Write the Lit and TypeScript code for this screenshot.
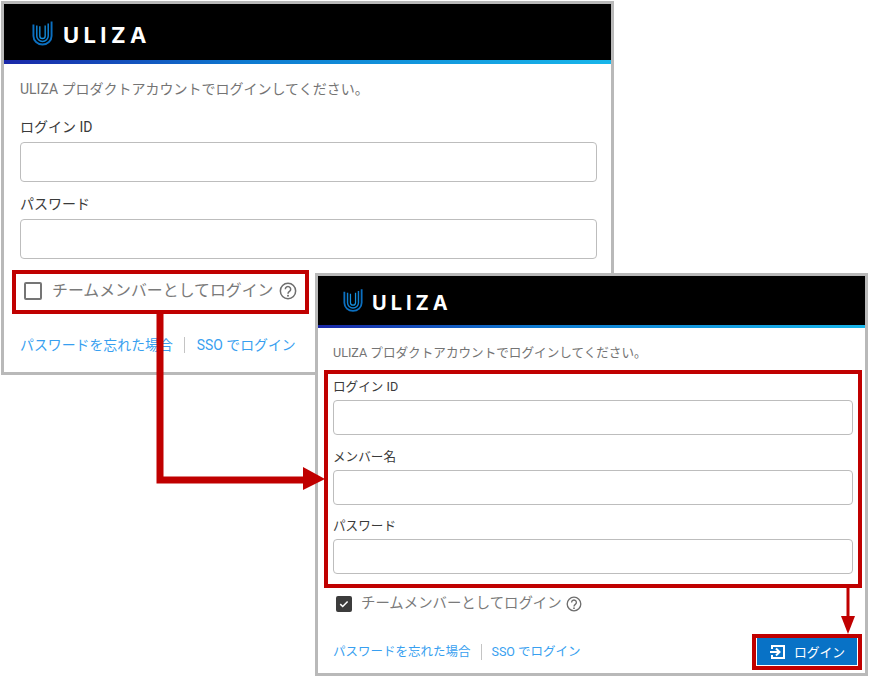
import { LitElement, html, css, svg } from "lit";
import { customElement, property } from "lit/decorators.js";

const logoMark = svg`<g fill="none" stroke-linecap="butt">
  <path d="M1.5 3v12a9.5 9 0 0 0 19 0V0" stroke="#0b6fc0" stroke-width="2"/>
  <path d="M5 4v11a6 5.8 0 0 0 12 0V2" stroke="#0f7fd0" stroke-width="1.6"/>
  <path d="M8.2 5v10a2.8 2.7 0 0 0 5.6 0V4" stroke="#1590dd" stroke-width="1.4"/>
</g>`;

@customElement("login-panel")
class LoginPanel extends LitElement {
  @property({ type: Boolean }) team = false;

  static styles = css`
    :host {
      display: flex;
      flex-direction: column;
      box-sizing: border-box;
      height: 100%;
      background: #fff;
      border: 3px solid #b9b9b9;
      font-family: Roboto, "Noto Sans CJK JP", sans-serif;
    }
    .head {
      flex: none;
      display: flex;
      align-items: center;
      gap: var(--logo-gap);
      height: var(--head-h);
      padding-top: var(--head-pad);
      padding-left: var(--logo-x);
      background: #000;
      border-bottom: var(--line-h) solid;
      border-image: linear-gradient(90deg, #1a27a8, #0e7ad0 40%, #18b6ea) 1;
    }
    .mark { width: var(--mark-w); height: var(--mark-h); flex: none; }
    .word {
      margin-top: var(--word-drop);
      color: #fff;
      font-family: Inter, "Liberation Sans", sans-serif;
      font-weight: 700;
      font-size: var(--word-size);
      letter-spacing: var(--word-track);
      line-height: 1;
    }
    .body {
      flex: 1;
      display: flex;
      flex-direction: column;
      padding: var(--pad-top) var(--pad-r) 0 var(--pad-l);
    }
    .intro {
      margin: 0 0 var(--intro-gap);
      color: #747474;
      font-size: var(--fs);
      line-height: 20px;
      white-space: nowrap;
    }
    .field { display: flex; flex-direction: column; }
    .field + .field { margin-top: var(--field-gap); }
    .label {
      color: #3a3a3a;
      font-size: var(--fs);
      line-height: 20px;
      margin-bottom: var(--label-gap);
    }
    .input {
      height: var(--input-h);
      box-sizing: border-box;
      border: 1px solid #bdbdbd;
      border-radius: 4px;
      background: #fff;
    }
    .check {
      display: flex;
      align-items: center;
      margin: var(--check-top) 0 0 var(--check-x);
      color: #7a7a7a;
      font-size: var(--check-fs);
      line-height: 20px;
    }
    .box {
      flex: none;
      box-sizing: border-box;
      width: var(--box);
      height: var(--box);
      margin-right: var(--box-gap);
      border: 2px solid #757575;
      border-radius: 2px;
      display: flex;
    }
    .box.on { background: #3c3c3c; border-color: #3c3c3c; }
    .box svg { width: 100%; height: 100%; }
    .help { flex: none; width: var(--help); height: var(--help); margin-left: var(--help-gap); }
    .foot {
      display: flex;
      align-items: center;
      justify-content: space-between;
      margin-top: var(--foot-top);
    }
    .links {
      display: flex;
      align-items: center;
      color: #389ff0;
      font-size: var(--link-fs);
      line-height: 20px;
      white-space: nowrap;
    }
    .sep { width: 1px; height: 16px; background: #c4c4c4; margin: 0 var(--sep-gap); }
    .btn {
      width: 100px;
      height: 27px;
      margin-right: -4px;
      background: #0872c6;
      color: #fff;
      font-size: 12.8px;
      display: flex;
      align-items: center;
      justify-content: center;
      gap: 7px;
    }
    .btn svg { width: 18px; height: 18px; }
  `;

  render() {
    return html`
      <div class="head">
        <svg class="mark" viewBox="0 0 22 25">${logoMark}</svg>
        <span class="word">ULIZA</span>
      </div>
      <div class="body">
        <p class="intro">ULIZA プロダクトアカウントでログインしてください。</p>
        <div class="field"><span class="label">ログイン ID</span><div class="input"></div></div>
        ${this.team ? html`<div class="field"><span class="label">メンバー名</span><div class="input"></div></div>` : ""}
        <div class="field"><span class="label">パスワード</span><div class="input"></div></div>
        <div class="check">
          <span class="box ${this.team ? "on" : ""}">
            ${this.team ? html`<svg viewBox="0 0 16 16"><path d="M3 8.2l3.3 3.2L12.8 4.6" fill="none" stroke="#fff" stroke-width="2"/></svg>` : ""}
          </span>
          <span>チームメンバーとしてログイン</span>
          <svg class="help" viewBox="0 0 24 24" fill="none">
            <circle cx="12" cy="12" r="10.2" stroke="#6e6e6e" stroke-width="2"/>
            <path d="M8.4 9.6a3.6 3.6 0 1 1 5.6 3c-1.3.9-2 1.4-2 3" stroke="#6e6e6e" stroke-width="2"/>
            <circle cx="12" cy="18.3" r="1.3" fill="#6e6e6e"/>
          </svg>
        </div>
        <div class="foot">
          <div class="links"><span>パスワードを忘れた場合</span><span class="sep"></span><span>SSO でログイン</span></div>
          ${this.team ? html`<div class="btn">
            <svg viewBox="0 0 18 18" fill="none" stroke="#fff" stroke-width="2">
              <path d="M3 6V3h12v12H3v-3"/>
              <path d="M1 9h9M7 5.5L10.5 9 7 12.5"/>
            </svg>
            <span>ログイン</span>
          </div>` : ""}
        </div>
      </div>
    `;
  }
}

@customElement("app-root")
export class AppRoot extends LitElement {
  static styles = css`
    :host { display: block; position: relative; width: 871px; height: 677px; overflow: hidden; background: #fff; }
    login-panel { position: absolute; }
    .one {
      left: 1px; top: 1px; width: 613px; height: 374px;
      --head-h: 53px; --head-pad: 3px; --line-h: 4px; --logo-x: 28px; --logo-gap: 10px;
      --mark-w: 21px; --mark-h: 25px; --word-size: 22px; --word-track: 4.4px; --word-drop: 3px;
      --pad-top: 15px; --pad-l: 16px; --pad-r: 14px;
      --fs: 14px; --intro-gap: 18px; --label-gap: 5px; --input-h: 40px; --field-gap: 12px;
      --check-fs: 15.9px; --check-top: 22px; --check-x: 4px; --box: 18px; --box-gap: 10px;
      --help: 18px; --help-gap: 5px; --foot-top: 34px; --link-fs: 13.9px; --sep-gap: 11.5px;
    }
    .two {
      left: 315px; top: 273px; width: 553px; height: 403px;
      --head-h: 49px; --head-pad: 0px; --line-h: 3px; --logo-x: 25px; --logo-gap: 9px;
      --mark-w: 20px; --mark-h: 23px; --word-size: 20px; --word-track: 4px; --word-drop: 4px;
      --pad-top: 15px; --pad-l: 15px; --pad-r: 12px;
      --fs: 12.6px; --intro-gap: 14px; --label-gap: 3px; --input-h: 35px; --field-gap: 11.5px;
      --check-fs: 14.4px; --check-top: 20px; --check-x: 3px; --box: 16px; --box-gap: 9px;
      --help: 16px; --help-gap: 4px; --foot-top: 24px; --link-fs: 12.5px; --sep-gap: 10px;
    }
    .marks { position: absolute; inset: 0; width: 871px; height: 677px; pointer-events: none; }
  `;

  render() {
    return html`
      <login-panel class="one"></login-panel>
      <login-panel class="two" team></login-panel>
      <svg class="marks" viewBox="0 0 871 677" fill="none">
        <g stroke="#c00000">
          <rect x="14" y="272" width="293" height="40" stroke-width="4"/>
          <rect x="326" y="372" width="534" height="214" stroke-width="4"/>
          <rect x="754" y="636" width="106" height="32" stroke-width="4"/>
          <path d="M160 312V480H306" stroke-width="7"/>
          <path d="M848 587V618" stroke-width="3"/>
        </g>
        <path d="M303 467L325 479L303 490Z" fill="#c00000"/>
        <path d="M841 616H855L848 634Z" fill="#c00000"/>
      </svg>
    `;
  }
}
